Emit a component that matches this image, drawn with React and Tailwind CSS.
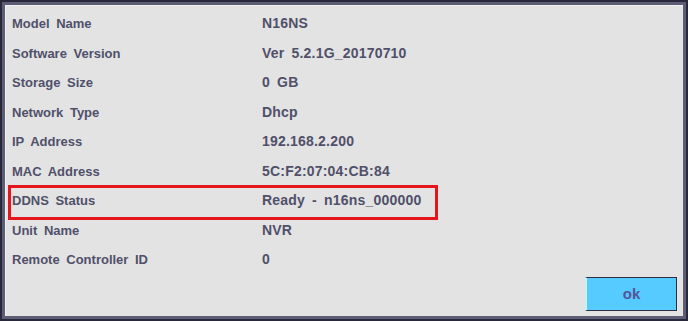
const rows = [
  ["Model Name", "N16NS"],
  ["Software Version", "Ver 5.2.1G_20170710"],
  ["Storage Size", "0 GB"],
  ["Network Type", "Dhcp"],
  ["IP Address", "192.168.2.200"],
  ["MAC Address", "5C:F2:07:04:CB:84"],
  ["DDNS Status", "Ready - n16ns_000000"],
  ["Unit Name", "NVR"],
  ["Remote Controller ID", "0"],
];

export default function App() {
  return (
    <div className="w-[688px] h-[321px] bg-[#28283a] p-[2px]">
      <div className="w-full h-full bg-[#5d5d76] p-[3px]">
        <div className="relative w-full h-full bg-[#e3e3e3] border-t border-l border-[#f2f2f2] pt-[3px] font-['Liberation_Sans',sans-serif] font-bold text-[13px] text-[#50506a] [word-spacing:3px]">
          {rows.map(([label, value]) => (
            <div key={label} className="flex items-center h-[29.5px]">
              <div className="w-[256px] pl-[6px]">{label}</div>
              <div className="text-[14px] tracking-[0.2px]">{value}</div>
            </div>
          ))}

          {/* highlight box */}
          <div className="absolute left-[2px] top-[179px] w-[430px] h-[35px] border-[3px] border-[#e5141d]" />

          <button className="absolute left-[579px] top-[271px] w-[92px] h-[34px] bg-[#55cbff] border border-[#2c2c44] border-l-[#c8f0ff] border-l-2 text-[#55559a] text-[15px]">
            ok
          </button>
        </div>
      </div>
    </div>
  );
}
